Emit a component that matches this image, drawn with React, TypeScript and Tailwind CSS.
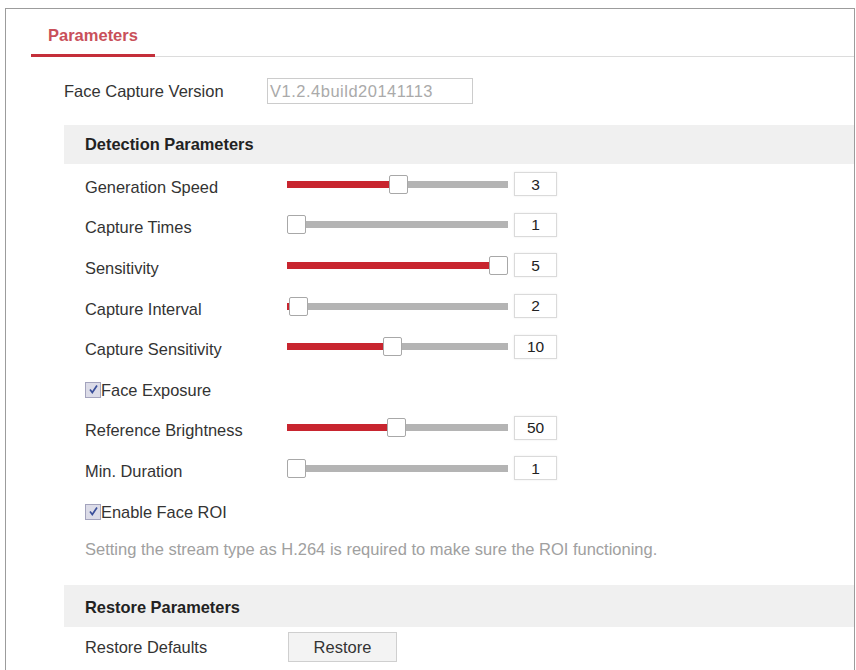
import React from "react";

const font = "font-['Liberation_Sans',Arial,sans-serif]";

function Slider({ pos }: { pos: number }) {
  // pos is the handle offset in px along a 202px run
  return (
    <div className="relative h-[19px] w-[221px] shrink-0">
      <div className="absolute left-0 right-0 top-[6px] h-[7px] bg-[#b4b4b4]" />
      <div className="absolute left-0 top-[6px] h-[7px] bg-[#c8252f]" style={{ width: pos + 2 }} />
      <div
        className="absolute top-0 h-[19px] w-[19px] rounded-[2px] border border-[#a8a8a8] bg-white"
        style={{ left: pos }}
      />
    </div>
  );
}

function SliderRow({ label, pos, value }: { label: string; pos: number; value: string }) {
  return (
    <div className="flex h-[40.6px] items-center pl-[79px]">
      <div className="w-[202px] shrink-0 pt-[5px] text-[16.4px] leading-[20px] text-[#333]">{label}</div>
      <Slider pos={pos} />
      <div className="ml-[6px] flex h-[24px] w-[43px] items-center justify-center border border-[#dadada] bg-white text-[15.5px] text-[#222] shadow-[0_0_2px_rgba(0,0,0,0.08)]">
        {value}
      </div>
    </div>
  );
}

function CheckRow({ label }: { label: string }) {
  return (
    <div className="flex h-[40.6px] items-center pl-[79px]">
      <div className="flex items-center pt-[5px]">
        <span className="flex h-[16px] w-[16px] items-center justify-center border border-[#a3a3bd] bg-[#dcdce8]">
          <svg width="11" height="11" viewBox="0 0 11 11">
            <path d="M2 5.5 L4.3 8.5 L9 1.5" fill="none" stroke="#3a4f9a" strokeWidth="1.7" />
          </svg>
        </span>
        <span className="text-[16.4px] leading-[20px] text-[#333]">{label}</span>
      </div>
    </div>
  );
}

export default function App() {
  return (
    <div className={`${font} min-h-[680px] bg-white pt-[8px]`}>
      <div className="ml-[5px] w-[850px] border border-[#9c9c9c] pb-[30px]">
        {/* tab bar */}
        <div className="ml-[25px] flex border-b border-[#dcdcdc]">
          <div className="-mb-px border-b-[3px] border-[#c42f3a] pl-[17px] pr-[17px] pt-[16px] pb-[8px] leading-[20px]">
            <span className="text-[16.5px] font-bold leading-[20px] text-[#c9505a]">Parameters</span>
          </div>
        </div>

        <div className="mt-[21px] flex h-[26px] items-center pl-[58px]">
          <div className="w-[203px] shrink-0 text-[16.5px] text-[#333]">Face Capture Version</div>
          <div className="flex h-[26px] w-[206px] items-center border border-[#cccccc] pl-[2px] text-[16.5px] tracking-[0.5px] text-[#aaaaaa]">
            V1.2.4build20141113
          </div>
        </div>

        <div className="ml-[58px] mt-[21px] flex h-[39px] items-center bg-[#f0f0f0] pl-[21px] text-[16.4px] font-bold text-[#222]">
          Detection Parameters
        </div>

        <SliderRow label="Generation Speed" pos={102} value="3" />
        <SliderRow label="Capture Times" pos={0} value="1" />
        <SliderRow label="Sensitivity" pos={202} value="5" />
        <SliderRow label="Capture Interval" pos={2} value="2" />
        <SliderRow label="Capture Sensitivity" pos={96} value="10" />
        <CheckRow label="Face Exposure" />
        <SliderRow label="Reference Brightness" pos={100} value="50" />
        <SliderRow label="Min. Duration" pos={0} value="1" />
        <CheckRow label="Enable Face ROI" />

        <div className="flex h-[40.6px] items-center pl-[79px] text-[16.5px] text-[#a0a0a0]">
          Setting the stream type as H.264 is required to make sure the ROI functioning.
        </div>

        <div className="ml-[58px] mt-[15px] flex h-[42px] items-center bg-[#f0f0f0] pl-[21px] pt-[2px] text-[16.4px] font-bold text-[#222]">
          Restore Parameters
        </div>

        <div className="mt-[5px] flex h-[30px] items-center pl-[79px]">
          <div className="w-[203px] shrink-0 text-[16.4px] text-[#333]">Restore Defaults</div>
          <button className="flex h-[30px] w-[109px] items-center justify-center border border-[#cfcfcf] bg-[#f3f3f3] text-[16.5px] text-[#333]">
            Restore
          </button>
        </div>
      </div>
    </div>
  );
}
